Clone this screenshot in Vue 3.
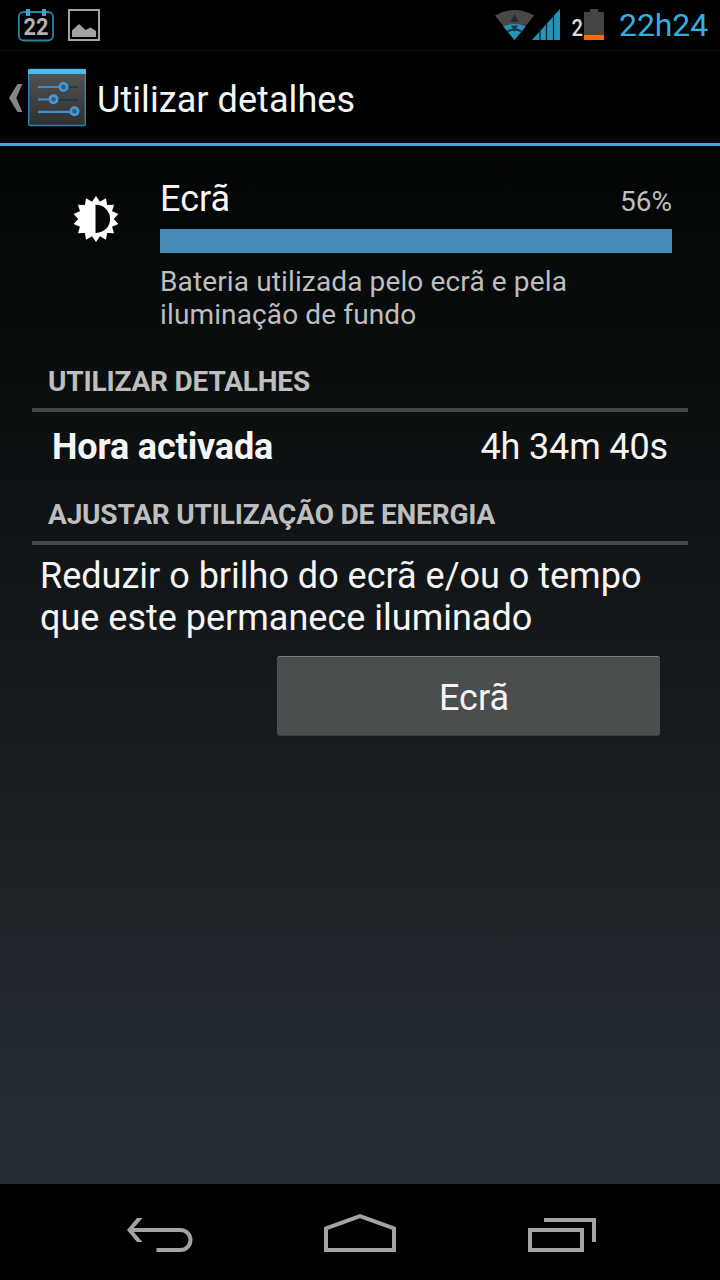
<script setup>
import { ref } from 'vue'

const item = ref({
  name: 'Ecrã',
  percent: '56%',
  fill: 100,
  summary: ['Bateria utilizada pelo ecrã e pela', 'iluminação de fundo'],
})

const spikes = 14
const sun = Array.from({ length: spikes * 2 }, (_, i) => {
  const r = i % 2 ? 17.8 : 23
  const a = (i * Math.PI) / spikes
  return `${(24 + r * Math.sin(a)).toFixed(2)},${(24 - r * Math.cos(a)).toFixed(2)}`
}).join(' ')
</script>

<template>
  <div class="screen">
    <header class="status">
      <svg class="notes" width="104" height="50" viewBox="0 0 104 50">
        <rect x="18.8" y="12" width="34.2" height="28.5" rx="5" fill="none" stroke="#2b86a0" stroke-width="1.8" />
        <path d="M26 9h4v7h-4zM42 9h4v7h-4z" fill="#33a5cf" />
        <text x="36" y="35" text-anchor="middle" class="day" textLength="25" lengthAdjust="spacingAndGlyphs">22</text>
        <rect x="69" y="10" width="30" height="30" fill="none" stroke="#a3a3a3" stroke-width="2" />
        <path d="M72 37V30.500l7-6.500 6.500 6 5-2.500 5.500 3.500V37z" fill="#a3a3a3" />
      </svg>
      <svg class="signals" width="116" height="50" viewBox="490 0 116 50">
        <path d="M514.500 40L495 15.500Q514.500 4.500 534 15.500Z" fill="#484848" />
        <path d="M514.500 40L503.300 26.500Q514.500 21.500 525.700 26.500Z" fill="#2793b8" />
        <path d="M514.500 13.500l4 8.500h-8z" fill="#272c2d" />
        <path d="M507.500 31.500Q514.500 27.500 521.500 31.500" fill="none" stroke="#123641" stroke-width="1.800" />
        <path d="M511 25.500h7l-3.500 6.500z" fill="#173b47" />
        <path d="M532 40L560 9V40Z" fill="#2793b8" />
        <path d="M540 28v12M546.500 22v18M553.500 15v25" stroke="#092631" stroke-width="1.300" />
        <text x="571.5" y="35.500" class="count" textLength="11.500" lengthAdjust="spacingAndGlyphs">2</text>
        <path d="M584 12h6V9h8v3h6v23h-20z" fill="#444" />
        <path d="M584 35h20v5h-20z" fill="#ff6a00" />
      </svg>
      <span class="clock">22h24</span>
    </header>

    <div class="bar">
      <svg width="88" height="91" viewBox="0 52 88 91">
        <defs>
          <linearGradient id="tile" x1="0" y1="0" x2="0" y2="1">
            <stop offset="0" stop-color="#555" />
            <stop offset="1" stop-color="#303030" />
          </linearGradient>
        </defs>
        <path d="M17.500 84h4.800l-6 14 6 14h-4.800l-8.500-14z" fill="#858585" />
        <rect x="28.700" y="69.500" width="56.600" height="56" rx="1" fill="url(#tile)" stroke="#2d83b8" stroke-width="1.400" />
        <path d="M28 74v-3.500q0-1.500 1.500-1.500h55q1.500 0 1.500 1.500V74z" fill="#4dbbe7" />
        <path d="M64 87h14M54 100h24" stroke="#16374d" stroke-width="1.500" />
        <path d="M38 87h22M38 99.500h12M38 111.800h32" stroke="#3b8fd4" stroke-width="2.200" />
        <g fill="#315e80" stroke="#4599d5" stroke-width="2.600">
          <circle cx="63.500" cy="87" r="3.700" />
          <circle cx="53.500" cy="99.300" r="3.700" />
          <circle cx="74.500" cy="111.200" r="3.700" />
        </g>
      </svg>
      <h1>Utilizar detalhes</h1>
    </div>

    <main>
      <section class="usage">
        <svg class="sun" width="48" height="48" viewBox="0 0 48 48">
          <polygon :points="sun" fill="#fff" />
          <path d="M23.500 9.800h.5a14 14 0 0 1 0 28.200h-.5z" fill="#060808" />
        </svg>
        <div class="info">
          <div class="top">
            <span class="name">{{ item.name }}</span>
            <span class="pct">{{ item.percent }}</span>
          </div>
          <div class="meter"><div class="fill" :style="{ width: item.fill + '%' }"></div></div>
          <p class="summary"><span>{{ item.summary[0] }}</span><br /><span>{{ item.summary[1] }}</span></p>
        </div>
      </section>

      <h2>Utilizar detalhes</h2>
      <div class="row"><b>Hora activada</b><span>4h 34m 40s</span></div>
      <h2>Ajustar utilização de energia</h2>
      <p class="advice">Reduzir o brilho do ecrã e/ou o tempo<br />que este permanece iluminado</p>
      <button type="button">Ecrã</button>
    </main>

    <nav>
      <svg width="720" height="96" viewBox="0 1184 720 96" fill="none" stroke="#a3a3a3" stroke-width="4">
        <path d="M131 1230H180.500a10 10 0 0 1 0 20H156.500" />
        <path d="M137 1218h5.500l-10.500 12 10.500 12H137l-10-12z" fill="#a3a3a3" stroke="none" />
        <path d="M326 1250V1228.400L360 1216.200 394 1228.400V1250Z" />
        <path d="M530 1230h52v20h-52zM544 1220h50v22" />
      </svg>
    </nav>
  </div>
</template>

<style>
body {
  background: #000;
}
</style>

<style scoped>
.screen {
  width: 720px;
  height: 1280px;
  display: flex;
  flex-direction: column;
  overflow: hidden;
  font-family: Roboto, "Noto Sans", sans-serif;
  font-size: 36px;
  color: #f5f5f5;
  background: linear-gradient(#000202 0, #000202 100px, #0d1011 430px, #171c1f 740px, #272e34 1184px);
}
h1, h2, p {
  margin: 0;
  font-weight: 400;
}
svg {
  display: block;
  flex: none;
}
.status {
  height: 50px;
  display: flex;
  align-items: center;
  background: #000;
}
.signals {
  margin-left: auto;
}
.day {
  font: 700 24px Roboto, sans-serif;
  fill: #b2b2b2;
}
.count {
  font: 500 23px Roboto, sans-serif;
  fill: #ddd;
}
.clock {
  width: 101px;
  margin-left: 13px;
  font-size: 32px;
  line-height: 52px;
  letter-spacing: -0.1px;
  color: #35aee0;
  white-space: nowrap;
}
.bar {
  height: 92px;
  display: flex;
  border-top: 1px solid #111414;
  border-bottom: 3px solid #3aa8dc;
  background: #000202;
}
.bar svg {
  margin-top: 1px;
}
h1 {
  margin-left: 9px;
  font-size: 36px;
  line-height: 98px;
  letter-spacing: 0.07px;
  white-space: nowrap;
}
main {
  flex: 1;
  display: flex;
  flex-direction: column;
  padding: 31px 32px 0;
}
.usage {
  display: flex;
  height: 180px;
}
.sun {
  margin: 18px 40px 0 40px;
}
.info {
  width: 512px;
}
.top {
  height: 52px;
  display: flex;
  justify-content: space-between;
}
.name {
  line-height: 45px;
}
.pct {
  font-size: 28px;
  line-height: 49px;
  color: #bebebe;
}
.meter {
  height: 24px;
}
.fill {
  height: 100%;
  background: #458cb7;
}
.summary {
  margin-top: 12px;
  font-size: 28px;
  line-height: 33px;
  letter-spacing: 0.13px;
  color: #bebebe;
  white-space: nowrap;
}
h2 {
  height: 51px;
  padding-left: 16px;
  border-bottom: 4px solid #414546;
  font-size: 28px;
  font-weight: 700;
  line-height: 49px;
  letter-spacing: -0.18px;
  color: #bebebe;
  text-transform: uppercase;
  white-space: nowrap;
}
.row {
  height: 78px;
  display: flex;
  justify-content: space-between;
  padding: 0 20px;
  line-height: 70px;
  letter-spacing: -0.14px;
}
.advice {
  padding: 10px 8px 0;
  line-height: 42px;
  white-space: nowrap;
}
button {
  width: 383px;
  height: 80px;
  margin: 17px 28px 0 auto;
  padding: 3px 0 0 11px;
  border: 0;
  border-top: 1px solid #7a7e7f;
  border-bottom: 1px solid #3a3e3f;
  border-radius: 3px;
  background: #4b4e4f;
  color: #f5f5f5;
  font: 400 36px Roboto, sans-serif;
}
nav {
  height: 96px;
  background: #000;
}
</style>
